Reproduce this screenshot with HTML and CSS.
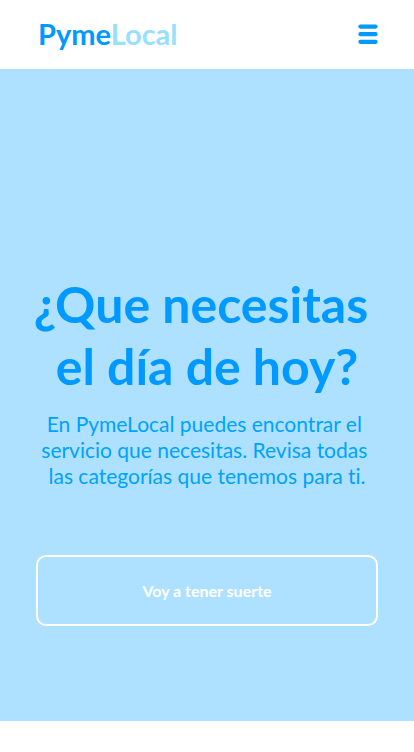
FILE: index.html
```html
<!DOCTYPE html>
<html lang="es">
<head>
<meta charset="utf-8">
<meta name="viewport" content="width=device-width, initial-scale=1">
<title>PymeLocal</title>
<link rel="stylesheet" href="styles.css">
</head>
<body>
<header class="header">
  <a class="logo" href="#">Pyme<span class="logo-light">Local</span></a>
  <button class="menu" type="button" aria-label="Menú">
    <svg width="20" height="20" viewBox="0 0 20 20" fill="none" stroke="currentColor" stroke-width="4.2" stroke-linecap="round" aria-hidden="true"><path d="M2.4 2.6h15.2M2.4 10.2h15.2M2.4 17.8h15.2"/></svg>
  </button>
</header>
<main class="hero">
  <h1 class="title">¿Que necesitas&nbsp;<br>el día de hoy?</h1>
  <p class="lead">En PymeLocal puedes encontrar el&nbsp;<br>servicio que necesitas. Revisa todas&nbsp;<br>las categorías que tenemos para ti.</p>
  <button class="lucky" type="button">Voy a tener suerte</button>
</main>
</body>
</html>
```
FILE: styles.css
```css
* { box-sizing: border-box; }
body { margin: 0; background: #fff; font-family: Lato, sans-serif; font-variant-ligatures: none; color: #0099ff; }
.header { display: flex; align-items: center; justify-content: space-between; padding: 16px 36px 17px; }
.logo { padding-left: 2px; font-size: 29px; line-height: 36px; font-weight: 700; color: #0099ff; text-decoration: none; }
.logo-light { color: #99e0ff; }
.menu { display: flex; padding: 0; border: 0; background: none; color: #0099ff; }
.hero { display: flex; flex-direction: column; padding: 204px 36px 95px; background: #aee1ff; text-align: center; }
.title { margin: 0 -8px; font-size: 50px; line-height: 62px; font-weight: 700; }
.lead { margin: 14px 0 66px; font-size: 21px; line-height: 26px; color: #00a2ff; }
.lucky { height: 71px; border: 2px solid #fff; border-radius: 10px; background: none; color: #fff; font: 700 16px/20px Lato, sans-serif; }
```
